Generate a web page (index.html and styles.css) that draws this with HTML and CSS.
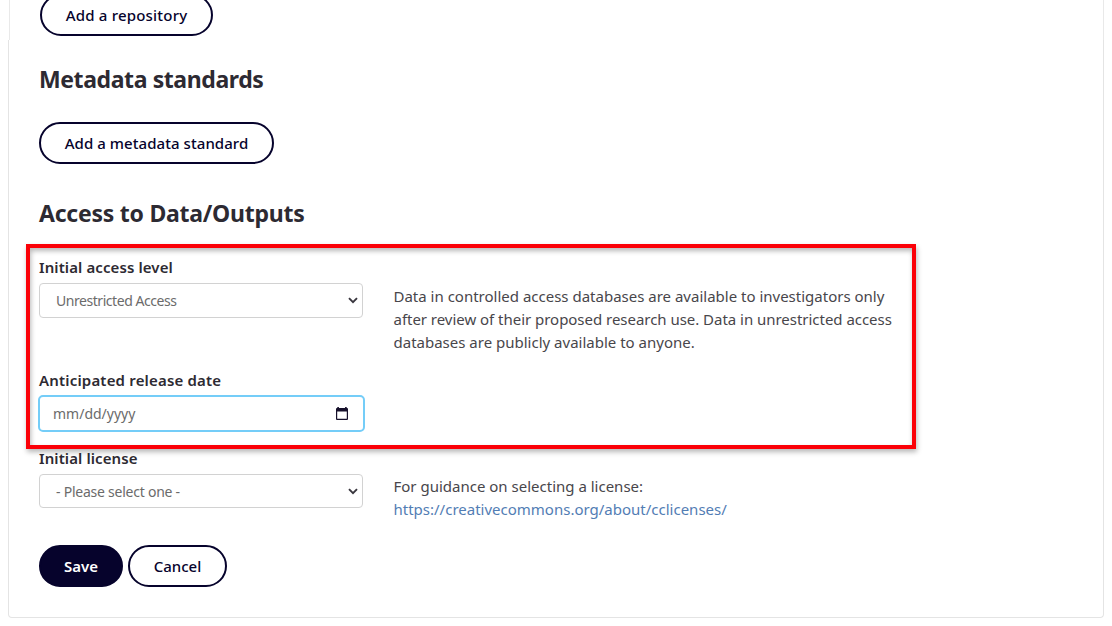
FILE: index.html
```html
<!DOCTYPE html>
<html lang="en">
<head>
<meta charset="utf-8">
<title>Research outputs</title>
<link rel="stylesheet" href="styles.css">
</head>
<body>
<main class="page">
  <section class="panel-top">
    <button class="btn btn-repository">Add a repository</button>
  </section>
  <section class="panel">
    <h2 class="heading heading-metadata">Metadata standards</h2>
    <button class="btn btn-metadata">Add a metadata standard</button>
    <h2 class="heading heading-access">Access to Data/Outputs</h2>

    <div class="row row-access">
      <div class="field">
        <div class="label label-access">Initial access level</div>
        <div class="control select"><span class="value-access">Unrestricted Access</span>
          <svg class="chevron" viewBox="0 0 10 7"><path d="M1 1.2 5 5.2 9 1.2"/></svg></div>
      </div>
      <p class="help">Data in controlled access databases are available to investigators only<br><span class="line-2">after review of their proposed research use. Data in unrestricted access</span><br>databases are publicly available to anyone.</p>
    </div>

    <div class="row row-date">
      <div class="field">
        <div class="label label-date">Anticipated release date</div>
        <div class="control date"><span>mm/dd/yyyy</span>
          <svg class="calendar" viewBox="0 0 12 13"><path fill-rule="evenodd" d="M1.3 0h1.6v1h6.2v-1h1.6v1h0.3a1 1 0 0 1 1 1v10a1 1 0 0 1-1 1H1a1 1 0 0 1-1-1v-10a1 1 0 0 1 1-1h0.3zM1.2 4.4v7.4h9.6V4.4z"/></svg></div>
      </div>
    </div>

    <div class="row row-license">
      <div class="field">
        <div class="label label-license">Initial license</div>
        <div class="control select"><span class="value-license">- Please select one -</span>
          <svg class="chevron" viewBox="0 0 10 7"><path d="M1 1.2 5 5.2 9 1.2"/></svg></div>
      </div>
      <p class="help">For guidance on selecting a license:<br><a class="link" href="#">https://creativecommons.org/about/cclicenses/</a></p>
    </div>

    <div class="actions">
      <button class="btn btn-save">Save</button>
      <button class="btn btn-cancel">Cancel</button>
    </div>
  </section>
  <div class="highlight"></div>
</main>
</body>
</html>
```

FILE: styles.css
```css
* { box-sizing: border-box; }
body {
  margin: 0;
  background: #fff;
  color: #2d2a32;
  font: 15px/23px "Noto Sans", "Open Sans", sans-serif;
  overflow: hidden;
}
.page { position: relative; height: 626px; padding: 0 8.5px 0 8px; }
.panel-top {
  display: flow-root;
  height: 40px;
  margin-left: 1px;
  padding-left: 30px;
  border: solid #e9e9e9;
  border-width: 0 1px;
}
.panel {
  height: 578px;
  padding: 24px 0 0 30px;
  border: 1px solid #e4e4e4;
  border-top: 0;
  border-radius: 0 0 4px 4px;
}
.btn {
  display: flex;
  align-items: center;
  justify-content: center;
  height: 42px;
  padding: 0;
  border: 2px solid #06032c;
  border-radius: 21px;
  background: #fff;
  color: #06032c;
  font: 500 15px/20px "Noto Sans", "Open Sans", sans-serif;
  white-space: nowrap;
}
.btn-repository { width: 173px; margin-top: -6px; letter-spacing: .2px; }
.btn-metadata { width: 235px; margin-top: 28px; letter-spacing: .06px; }
.heading { margin: 0; height: 30px; font-size: 23px; line-height: 30px; font-weight: 700; white-space: nowrap; }
.heading-metadata { letter-spacing: -.4px; }
.heading-access { margin-top: 34px; letter-spacing: -.24px; }
.row { display: flex; gap: 30.5px; }
.field { width: 324px; flex: none; }
.label { height: 20px; line-height: 20px; font-weight: 600; }
.label-access { letter-spacing: .1px; }
.label-date { letter-spacing: .18px; }
.label-license { letter-spacing: .1px; }
.row-access { height: 113px; margin-top: 29px; }
.row-date { height: 78px; }
.row-license { height: 96px; }
.control {
  display: flex;
  align-items: center;
  justify-content: space-between;
  height: 35px;
  margin-top: 6px;
  border: 1px solid #d2d2d2;
  border-radius: 4px;
  color: #6b6b6b;
  font-size: 14px;
}
.row-license .control { height: 34px; }
.select { padding: 0 4px 0 16px; }
.date {
  height: 37px;
  margin: 5px -1.5px 0 -1px;
  padding: 0 15px 0 13px;
  border: 2px solid #74cdf8;
  border-radius: 5px;
}
.value-access { letter-spacing: -.45px; }
.value-license { letter-spacing: -.24px; }
.chevron { width: 10px; height: 7px; fill: none; stroke: #39363e; stroke-width: 1.9; }
.calendar { width: 12px; height: 13px; fill: #16102b; }
.help { margin: 28px 0 0; color: #48464b; white-space: nowrap; }
.row-license .help { margin-top: 27px; }
.line-2 { letter-spacing: -.03px; }
.link { color: #527db4; text-decoration: none; }
.actions { display: flex; gap: 5px; padding-top: 1px; }
.btn-save { width: 84px; background: #06032c; color: #fff; font-weight: 600; }
.btn-cancel { width: 99px; }
.highlight {
  position: absolute;
  left: 26px;
  top: 244px;
  width: 890px;
  height: 205px;
  border: 4px solid #fb0007;
  box-shadow: 1px 3px 5px rgba(0, 0, 0, .28), inset 1px 3px 5px rgba(0, 0, 0, .28);
}
```
